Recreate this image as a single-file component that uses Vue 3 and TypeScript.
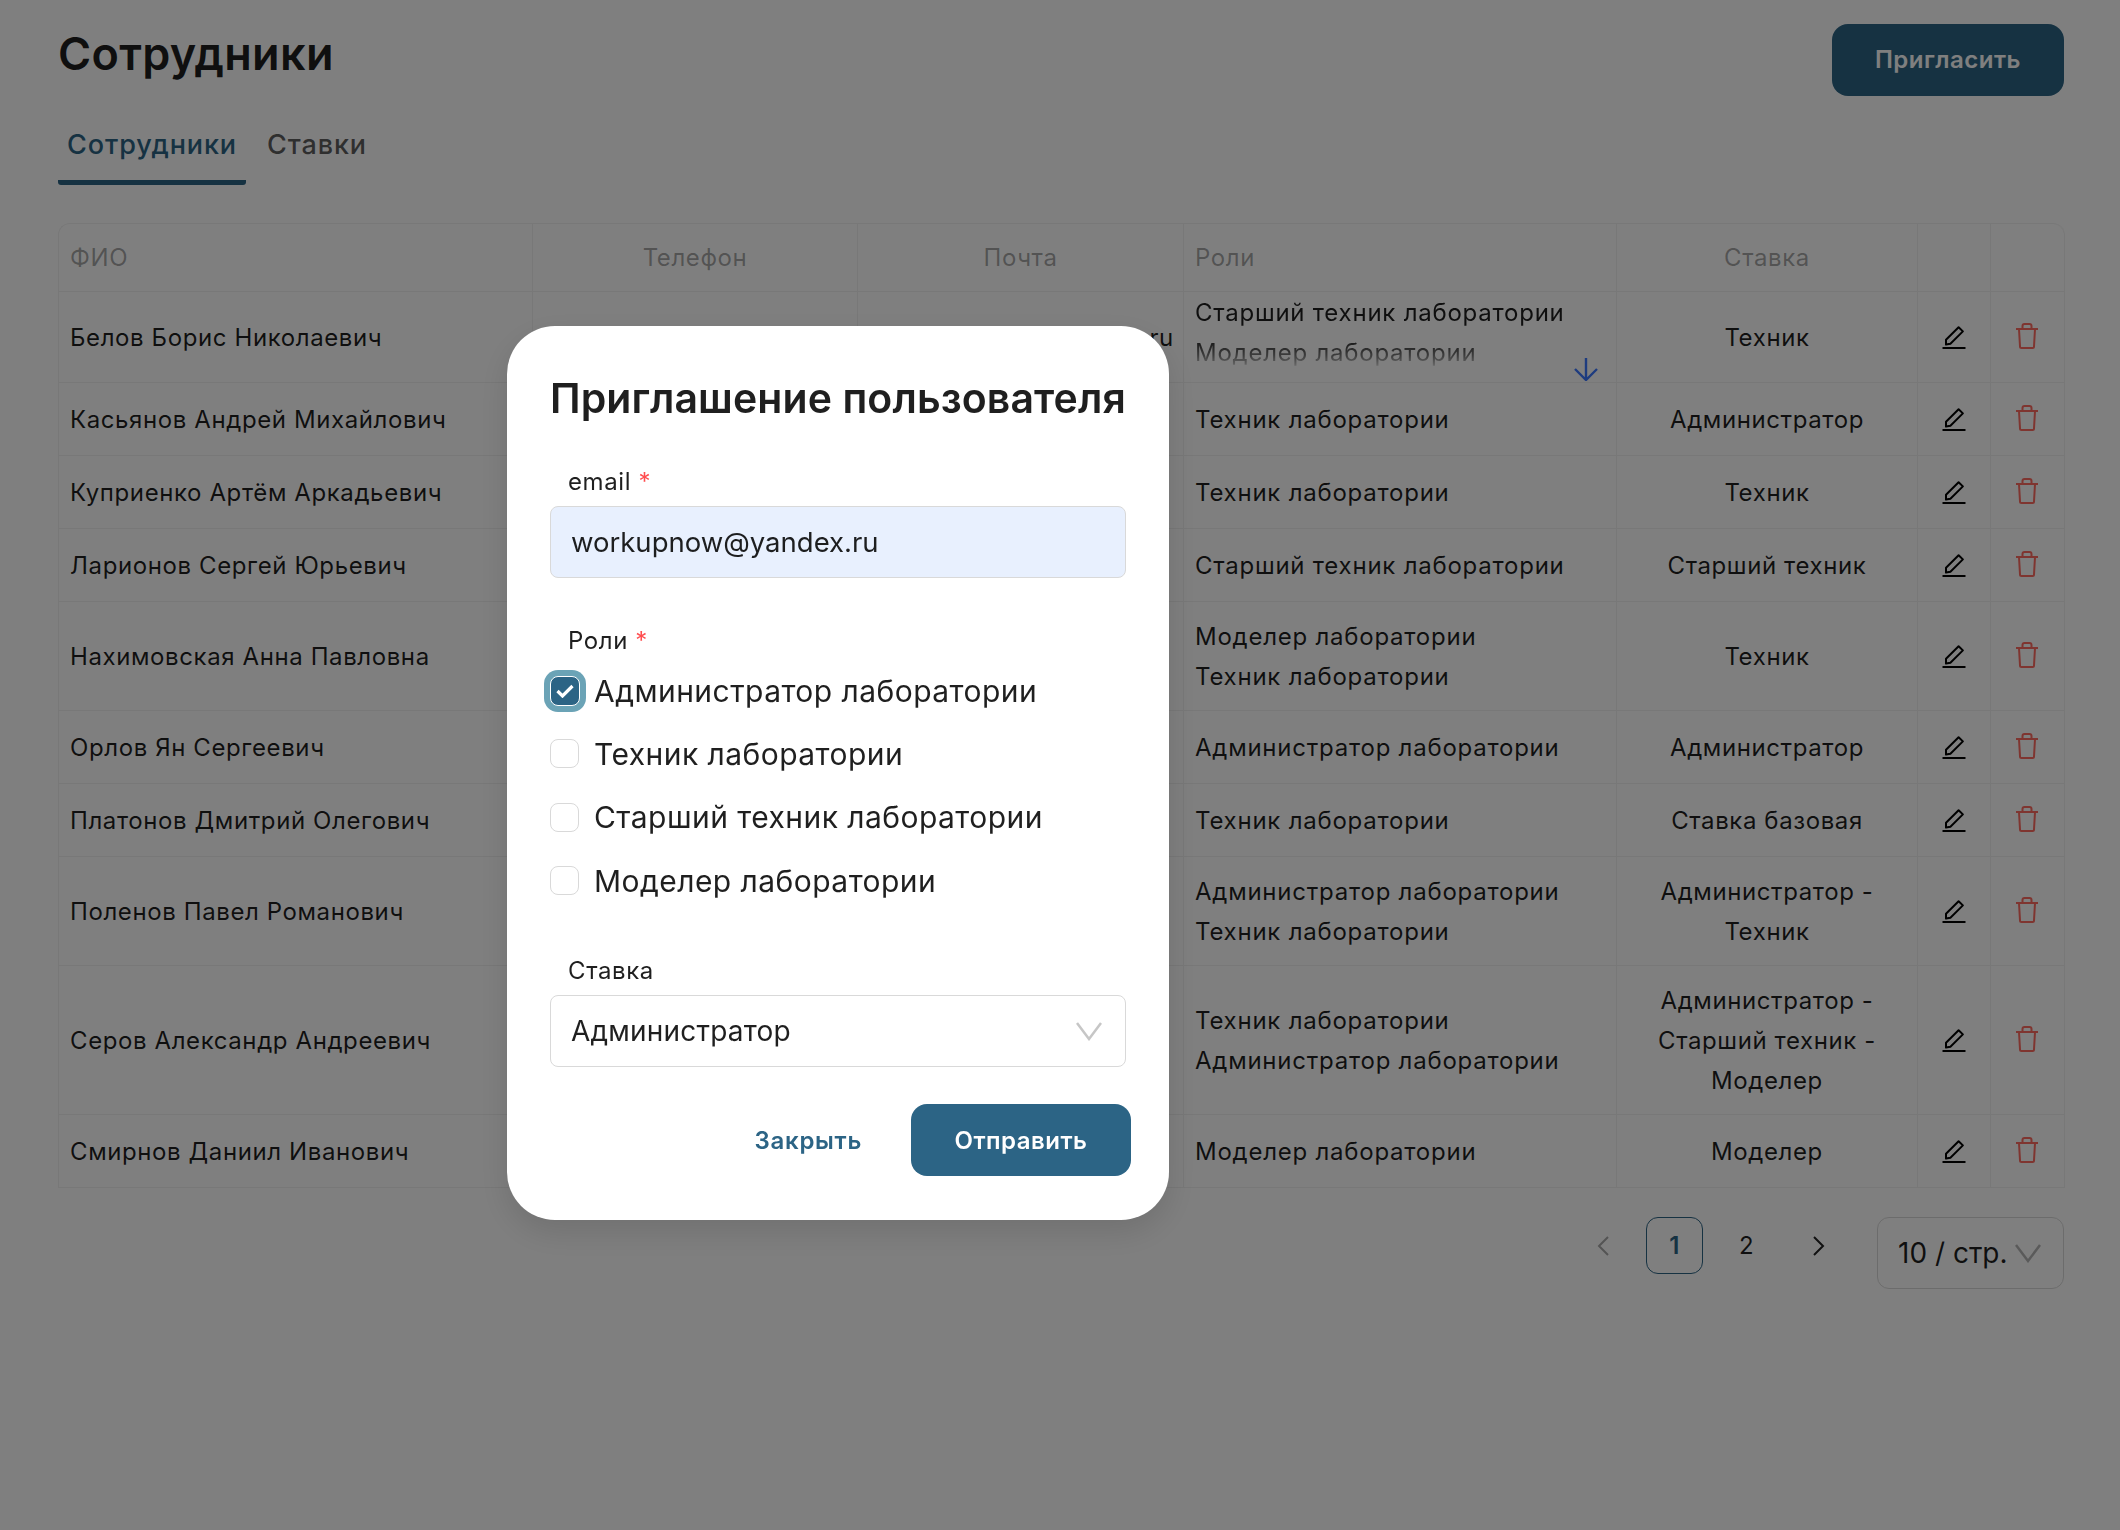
<script setup lang="ts">
interface Employee {
  name: string
  email?: string
  roles: string[]
  rate: string[]
  collapsed?: boolean
}

const employees: Employee[] = [
  { name: 'Белов Борис Николаевич', email: 'belov.boris.nr@yandex.ru', roles: ['Старший техник лаборатории', 'Моделер лаборатории'], rate: ['Техник'], collapsed: true },
  { name: 'Касьянов Андрей Михайлович', roles: ['Техник лаборатории'], rate: ['Администратор'] },
  { name: 'Куприенко Артём Аркадьевич', roles: ['Техник лаборатории'], rate: ['Техник'] },
  { name: 'Ларионов Сергей Юрьевич', roles: ['Старший техник лаборатории'], rate: ['Старший техник'] },
  { name: 'Нахимовская Анна Павловна', roles: ['Моделер лаборатории', 'Техник лаборатории'], rate: ['Техник'] },
  { name: 'Орлов Ян Сергеевич', roles: ['Администратор лаборатории'], rate: ['Администратор'] },
  { name: 'Платонов Дмитрий Олегович', roles: ['Техник лаборатории'], rate: ['Ставка базовая'] },
  { name: 'Поленов Павел Романович', roles: ['Администратор лаборатории', 'Техник лаборатории'], rate: ['Администратор -', 'Техник'] },
  { name: 'Серов Александр Андреевич', roles: ['Техник лаборатории', 'Администратор лаборатории'], rate: ['Администратор -', 'Старший техник -', 'Моделер'] },
  { name: 'Смирнов Даниил Иванович', roles: ['Моделер лаборатории'], rate: ['Моделер'] },
]

const roleOptions = [
  { label: 'Администратор лаборатории', checked: true },
  { label: 'Техник лаборатории', checked: false },
  { label: 'Старший техник лаборатории', checked: false },
  { label: 'Моделер лаборатории', checked: false },
]
</script>

<template>
  <div class="page">
    <header class="top">
      <h1 class="title">Сотрудники</h1>
      <button class="invite">Пригласить</button>
    </header>

    <nav class="tabs">
      <span class="tab active">Сотрудники</span>
      <span class="tab">Ставки</span>
    </nav>

    <table class="staff">
      <colgroup>
        <col style="width: 474px" />
        <col style="width: 325px" />
        <col style="width: 326px" />
        <col style="width: 433px" />
        <col style="width: 301px" />
        <col style="width: 73px" />
        <col style="width: 74px" />
      </colgroup>
      <thead>
        <tr>
          <th>ФИО</th>
          <th class="center">Телефон</th>
          <th class="center">Почта</th>
          <th>Роли</th>
          <th class="center">Ставка</th>
          <th></th>
          <th></th>
        </tr>
      </thead>
      <tbody>
        <tr v-for="item in employees" :key="item.name" :class="{ tall: item.collapsed }">
          <td>{{ item.name }}</td>
          <td class="center"></td>
          <td class="center mail">{{ item.email }}</td>
          <td class="roles" :class="{ 'roles-cell': item.collapsed }">
            <div :class="{ fade: item.collapsed }">
              <div v-for="role in item.roles" :key="role">{{ role }}</div>
            </div>
            <svg v-if="item.collapsed" class="more" width="24" height="24" viewBox="0 0 24 24" fill="none" stroke="#3d78ff" stroke-width="2.400">
              <path d="M12 1v22M1 12l11 11 11-11" />
            </svg>
          </td>
          <td class="center">
            <div v-for="part in item.rate" :key="part">{{ part }}</div>
          </td>
          <td class="center icon-cell">
            <svg width="26" height="26" viewBox="0 0 26 26" fill="none" stroke="#000" stroke-width="2">
              <path d="M5 21.500v-4.700L17.600 4.200l4.300 4.200L9.400 20.800 5 21.500Z" stroke-linejoin="round" />
              <path d="M1.500 25h23" />
            </svg>
          </td>
          <td class="center icon-cell">
            <svg width="24" height="26" viewBox="0 0 24 26" fill="none" stroke="#ff6a60" stroke-width="2">
              <path d="M1 6h22M4 6l1 17.500c0 1 .7 1.500 1.500 1.500h11c.8 0 1.500-.5 1.500-1.500L20 6M7.500 6V3c0-1 .6-2 2-2h5c1.400 0 2 1 2 2v3" />
            </svg>
          </td>
        </tr>
      </tbody>
    </table>

    <div class="pager">
      <span class="page-item">
        <svg width="14" height="22" viewBox="0 0 14 22" fill="none" stroke="#a8a8a8" stroke-width="2"><path d="M12 2 3 11l9 9" /></svg>
      </span>
      <span class="page-item current">1</span>
      <span class="page-item">2</span>
      <span class="page-item">
        <svg width="14" height="22" viewBox="0 0 14 22" fill="none" stroke="#222" stroke-width="2"><path d="m2 2 9 9-9 9" /></svg>
      </span>
      <div class="page-size">
        <span>10 / стр.</span>
        <svg width="28" height="20" viewBox="0 0 28 20" fill="none" stroke="#b5b5b5" stroke-width="2.500"><path d="m2 2 12 16L26 2" /></svg>
      </div>
    </div>

    <div class="overlay">
      <form class="modal" @submit.prevent>
        <h2 class="modal-title">Приглашение пользователя</h2>

        <label class="field-label">email <i>*</i></label>
        <input class="input" type="text" value="workupnow@yandex.ru" />

        <div class="field-label roles-label">Роли <i>*</i></div>
        <div class="options">
          <div v-for="option in roleOptions" :key="option.label" class="option">
            <span class="box" :class="{ checked: option.checked }">
              <svg v-if="option.checked" width="18" height="14" viewBox="0 0 18 14" fill="none" stroke="#fff" stroke-width="3.200">
                <path d="m1.500 7 5 5 10-10" />
              </svg>
            </span>
            {{ option.label }}
          </div>
        </div>

        <div class="field-label rate-label">Ставка</div>
        <div class="input select">
          <span>Администратор</span>
          <svg width="28" height="20" viewBox="0 0 28 20" fill="none" stroke="#c6c6c6" stroke-width="2.500"><path d="m2 2 12 16L26 2" /></svg>
        </div>

        <div class="actions">
          <button class="close" type="button">Закрыть</button>
          <button class="send" type="submit">Отправить</button>
        </div>
      </form>
    </div>
  </div>
</template>

<style>
html,
body {
  margin: 0;
  background: #fff;
}
</style>

<style scoped>
.page {
  position: relative;
  box-sizing: border-box;
  height: 1530px;
  overflow: hidden;
  padding: 24px 56px 0 58px;
  font-family: Inter, 'Noto Sans', sans-serif;
  font-size: 24px;
  letter-spacing: 0.6px;
  color: rgba(0, 0, 0, 0.88);
}

.top {
  display: flex;
  justify-content: space-between;
  align-items: flex-start;
}

.title {
  margin: 2px 0 0;
  font-size: 45px;
  line-height: 56px;
  font-weight: 600;
  letter-spacing: 0.3px;
}

.invite,
.send {
  height: 72px;
  border: 0;
  border-radius: 16px;
  background: #2c6485;
  color: #fff;
  font-family: inherit;
  font-size: 24px;
  font-weight: 600;
  letter-spacing: 0.5px;
}

.invite {
  width: 232px;
  padding-bottom: 3px;
}

.send {
  width: 220px;
  padding-bottom: 1px;
}

.tabs {
  display: flex;
  gap: 12px;
  margin: 28px 0 38px;
}

.tab {
  padding: 1px 9px 15px;
  font-size: 27px;
  line-height: 40px;
  font-weight: 500;
  letter-spacing: 0.9px;
  color: rgba(0, 0, 0, 0.65);
  border-bottom: 5px solid transparent;
}

.tab.active {
  color: #2c6485;
  border-bottom-color: #2c6485;
  border-radius: 0 0 3px 3px;
}

.staff {
  width: 2006px;
  table-layout: fixed;
  border-collapse: separate;
  border-spacing: 0;
  border: 1px solid #f0f0f0;
  border-width: 1px 0 0 1px;
  border-top-left-radius: 12px;
  border-top-right-radius: 12px;
}

.staff th,
.staff td {
  box-sizing: border-box;
  padding: 15px 11px 13px;
  line-height: 40px;
  text-align: left;
  border-right: 1px solid #f0f0f0;
  border-bottom: 1px solid #f0f0f0;
}

.staff th {
  height: 68px;
  padding: 13px 11px;
  font-weight: 400;
  color: rgba(0, 0, 0, 0.36);
}

.staff th:last-child {
  border-top-right-radius: 12px;
}

.staff tbody tr {
  height: 73px;
}

.staff tbody tr.tall {
  height: 91px;
}

.staff .center {
  text-align: center;
}

.staff .mail {
  white-space: nowrap;
}

.staff .roles {
  letter-spacing: 0.76px;
}

.staff .icon-cell {
  padding: 0 1px 2px 0;
  line-height: 0;
}

.staff .roles-cell {
  position: relative;
  padding: 1px 11px 0;
  vertical-align: top;
}

.fade {
  height: 89px;
  overflow: hidden;
  -webkit-mask-image: linear-gradient(to bottom, #000 50%, rgba(0, 0, 0, 0.6) 70%, transparent 88%);
  mask-image: linear-gradient(to bottom, #000 50%, rgba(0, 0, 0, 0.6) 70%, transparent 88%);
}

.more {
  position: absolute;
  right: 18px;
  bottom: 1px;
}

.pager {
  display: flex;
  justify-content: flex-end;
  align-items: flex-start;
  gap: 15px;
  margin-top: 29px;
}

.page-item {
  display: flex;
  align-items: center;
  justify-content: center;
  box-sizing: border-box;
  width: 57px;
  height: 57px;
  font-size: 24px;
}

.page-item.current {
  border: 1px solid #2c6485;
  border-radius: 12px;
  color: #2c6485;
  font-weight: 600;
}

.page-size {
  display: flex;
  align-items: center;
  justify-content: space-between;
  box-sizing: border-box;
  width: 187px;
  height: 72px;
  margin-left: 15px;
  padding: 0 21px 0 20px;
  border: 1px solid #d9d9d9;
  border-radius: 12px;
  font-size: 28px;
  letter-spacing: 0;
}

.overlay {
  position: fixed;
  inset: 0;
  padding: 326px 0 0 507px;
  background: rgba(0, 0, 0, 0.5);
}

.modal {
  box-sizing: border-box;
  width: 662px;
  height: 894px;
  padding: 44px 43px;
  border-radius: 48px;
  background: #fff;
  box-shadow: 0 12px 32px rgba(0, 0, 0, 0.12);
}

.modal-title {
  margin: 0 0 40px;
  font-size: 41px;
  line-height: 56px;
  font-weight: 600;
  letter-spacing: 0.1px;
  white-space: nowrap;
}

.field-label {
  display: block;
  margin: 0 0 8px 18px;
  line-height: 32px;
}

.field-label i {
  font-style: normal;
  color: #ff4d4f;
}

.roles-label {
  margin-top: 47px;
  margin-bottom: 2px;
}

.rate-label {
  margin-top: 43px;
}

.input {
  display: block;
  box-sizing: border-box;
  width: 576px;
  height: 72px;
  padding: 0 20px;
  border: 1px solid #d9d9d9;
  border-radius: 8px;
  background: #e8f0fe;
  font-family: inherit;
  font-size: 27.500px;
  letter-spacing: 0;
  color: rgba(0, 0, 0, 0.88);
  outline: none;
}

.select {
  display: flex;
  align-items: center;
  justify-content: space-between;
  padding-right: 22px;
  background: #fff;
  font-size: 28px;
  letter-spacing: 0.2px;
}

.option {
  display: flex;
  align-items: center;
  gap: 15px;
  height: 63.300px;
  font-size: 30px;
  letter-spacing: 0.45px;
}

.box {
  display: flex;
  align-items: center;
  justify-content: center;
  box-sizing: border-box;
  width: 29px;
  height: 29px;
  border: 1px solid #d9d9d9;
  border-radius: 8px;
  background: #fff;
}

.box.checked {
  width: 30px;
  height: 30px;
  margin-right: -1px;
  border-color: #fff;
  background: #2c6485;
  box-shadow: 0 0 0 6px #6ba3b6;
}

.actions {
  display: flex;
  justify-content: flex-end;
  gap: 8px;
  margin: 37px -5px 0 0;
}

.close {
  height: 72px;
  padding: 0 41px;
  border: 0;
  background: transparent;
  color: #2c6485;
  font-family: inherit;
  font-size: 24px;
  font-weight: 600;
  letter-spacing: 0.7px;
}
</style>
